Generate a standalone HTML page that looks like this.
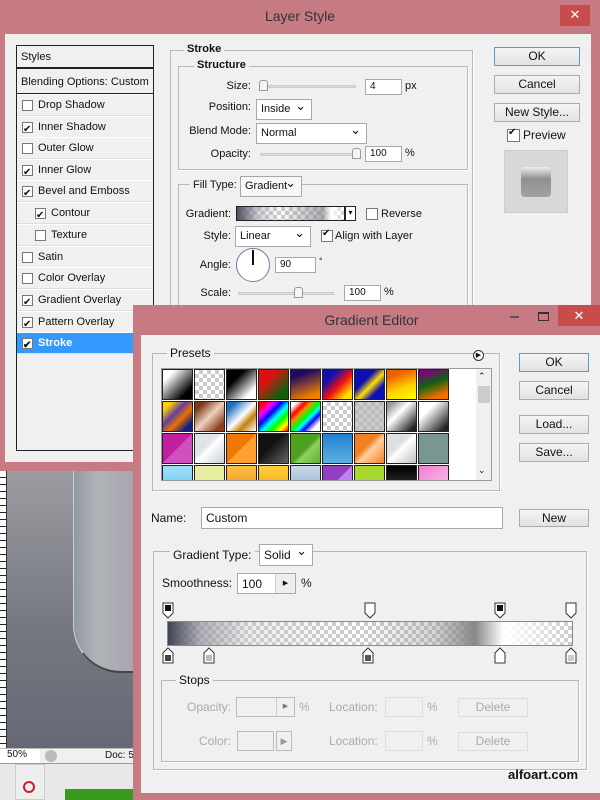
<!DOCTYPE html>
<html><head><meta charset="utf-8"><style>
*{margin:0;padding:0;box-sizing:border-box}
body{width:600px;height:800px;overflow:hidden;position:relative;background:#e8e8e8;font-family:"Liberation Sans",sans-serif;font-size:11px;color:#111}
.a{position:absolute}
.pink{background:#c67b82}
.gb{position:absolute;border:1px solid #b8b8b8;box-shadow:1px 1px 0 #fff}
.lg{position:absolute;background:#f0f0f0;padding:0 3px;white-space:nowrap}
.inp{position:absolute;background:#fff;border:1px solid #a8a8a8;padding:2px 4px;white-space:nowrap;overflow:hidden}
.sel{position:absolute;background:#fff;border:1px solid #a8a8a8;padding:3px 4px;white-space:nowrap}
.sel:after{content:"⌄";position:absolute;right:5px;top:-2px;font-size:13px}
.btn{position:absolute;background:linear-gradient(#f4f4f4,#e2e2e2);border:1px solid #acacac;text-align:center;font-size:12px;line-height:16px}
.cb{position:absolute;width:11px;height:11px;border:1px solid #777;background:#fff}
.cb.on:after{content:"✔";position:absolute;left:0px;top:-3px;font-size:10px;color:#111}
.li{position:absolute;left:17px;width:135px;height:22px;border-top:1px solid #fff;border-bottom:1px solid #ddd;line-height:20px;padding-left:21px;white-space:nowrap}
.li .cb{left:5px;top:5px}
.r{text-align:right}
.sl{position:absolute;height:3px;background:#ddd;border:1px solid #ccc}
.th{position:absolute;width:9px;height:11px;border:1px solid #999;background:#f4f4f4;border-radius:3px 3px 0 0}
.sw{position:absolute;width:31px;height:31px;border:1px solid #222}
.chk{background-color:#fff;background-image:linear-gradient(45deg,#ccc 25%,transparent 25%,transparent 75%,#ccc 75%),linear-gradient(45deg,#ccc 25%,transparent 25%,transparent 75%,#ccc 75%);background-size:8px 8px;background-position:0 0,4px 4px}
.dis{color:#aaa}
</style></head><body>

<!-- Layer Style dialog -->
<div class="a pink" style="left:0;top:0;width:600px;height:471px"></div>
<div class="a" style="left:0;top:8px;width:600px;text-align:center;font-size:14px;color:#333">Layer Style</div>
<div class="a" style="left:560px;top:5px;width:30px;height:21px;background:#c94c4c;color:#fff;text-align:center;font-size:13px;line-height:20px">✕</div>
<div class="a" style="left:5px;top:34px;width:586px;height:428px;background:#f0f0f0"></div>

<div class="a" style="left:16px;top:45px;width:138px;height:406px;border:1px solid #222;background:#f0f0f0"></div>
<div class="a" style="left:17px;top:46px;width:136px;height:23px;border-bottom:2px solid #222;line-height:22px;padding-left:4px">Styles</div>
<div class="a" style="left:17px;top:71px;width:136px;height:23px;border-bottom:1px solid #222;line-height:22px;padding-left:4px">Blending Options: Custom</div>
<div class="li" style="top:94px"><span class="cb"></span>Drop Shadow</div>
<div class="li" style="top:116px"><span class="cb on"></span>Inner Shadow</div>
<div class="li" style="top:137px"><span class="cb"></span>Outer Glow</div>
<div class="li" style="top:159px"><span class="cb on"></span>Inner Glow</div>
<div class="li" style="top:180px"><span class="cb on"></span>Bevel and Emboss</div>
<div class="li" style="top:202px;padding-left:34px"><span class="cb on" style="left:18px"></span>Contour</div>
<div class="li" style="top:224px;padding-left:34px"><span class="cb" style="left:18px"></span>Texture</div>
<div class="li" style="top:246px"><span class="cb"></span>Satin</div>
<div class="li" style="top:267px"><span class="cb"></span>Color Overlay</div>
<div class="li" style="top:289px"><span class="cb on"></span>Gradient Overlay</div>
<div class="li" style="top:311px"><span class="cb on"></span>Pattern Overlay</div>
<div class="li" style="top:332px;background:#3399ff;color:#fff;font-weight:bold"><span class="cb on"></span>Stroke</div>

<div class="gb" style="left:170px;top:50px;width:303px;height:260px"></div>
<div class="lg" style="left:184px;top:43px;font-weight:bold">Stroke</div>
<div class="gb" style="left:178px;top:66px;width:290px;height:104px"></div>
<div class="lg" style="left:194px;top:59px;font-weight:bold">Structure</div>
<div class="a r" style="left:180px;top:80px;width:71px">Size:</div>
<div class="sl" style="left:260px;top:85px;width:96px"></div><div class="th" style="left:259px;top:80px"></div>
<div class="inp" style="left:365px;top:79px;width:37px;height:16px;font-size:10px;padding-top:1px">4</div>
<div class="a" style="left:405px;top:80px">px</div>
<div class="a r" style="left:180px;top:101px;width:71px">Position:</div>
<div class="sel" style="left:256px;top:99px;width:56px;height:21px">Inside</div>
<div class="a r" style="left:180px;top:125px;width:71px">Blend Mode:</div>
<div class="sel" style="left:256px;top:123px;width:111px;height:21px">Normal</div>
<div class="a r" style="left:180px;top:148px;width:71px">Opacity:</div>
<div class="sl" style="left:260px;top:153px;width:96px"></div><div class="th" style="left:352px;top:148px"></div>
<div class="inp" style="left:365px;top:146px;width:37px;height:16px;font-size:10px;padding-top:1px">100</div>
<div class="a" style="left:405px;top:147px">%</div>

<div class="gb" style="left:178px;top:184px;width:290px;height:130px"></div>
<div class="lg" style="left:190px;top:179px">Fill Type:</div>
<div class="sel" style="left:240px;top:176px;width:62px;height:21px;background:#f7f7f7;padding-right:14px">Gradient</div>
<div class="a r" style="left:180px;top:208px;width:51px">Gradient:</div>
<div class="a chk" style="left:236px;top:206px;width:109px;height:15px;border:1px solid #222"></div>
<div class="a" style="left:237px;top:207px;width:107px;height:13px;background:linear-gradient(90deg,#505060,rgba(160,160,170,.5) 20%,rgba(255,255,255,0) 40%,rgba(120,120,130,.6) 80%,#fff 88%,rgba(255,255,255,0))"></div>
<div class="a" style="left:345px;top:206px;width:11px;height:15px;border:1px solid #222;background:#fff;font-size:8px;text-align:center;line-height:12px">▾</div>
<div class="cb" style="left:366px;top:208px;width:12px;height:12px"></div>
<div class="a" style="left:381px;top:208px">Reverse</div>
<div class="a r" style="left:180px;top:230px;width:51px">Style:</div>
<div class="sel" style="left:235px;top:226px;width:76px;height:21px">Linear</div>
<div class="cb on" style="left:321px;top:230px;width:12px;height:12px"></div>
<div class="a" style="left:335px;top:230px">Align with Layer</div>
<div class="a r" style="left:180px;top:259px;width:51px">Angle:</div>
<div class="a" style="left:236px;top:248px;width:34px;height:34px;border:1px solid #7080a0;border-radius:50%;background:#fff"></div>
<div class="a" style="left:252px;top:250px;width:2px;height:15px;background:#111"></div>
<div class="inp" style="left:275px;top:257px;width:41px;height:16px;font-size:10px;padding-top:1px">90</div>
<div class="a" style="left:319px;top:256px;font-size:9px">°</div>
<div class="a r" style="left:180px;top:287px;width:51px">Scale:</div>
<div class="sl" style="left:238px;top:292px;width:96px"></div><div class="th" style="left:294px;top:287px"></div>
<div class="inp" style="left:344px;top:285px;width:37px;height:16px;font-size:10px;padding-top:1px">100</div>
<div class="a" style="left:384px;top:286px">%</div>

<div class="btn" style="left:494px;top:47px;width:86px;height:19px;border-color:#5b9bd5">OK</div>
<div class="btn" style="left:494px;top:75px;width:86px;height:19px">Cancel</div>
<div class="btn" style="left:494px;top:103px;width:86px;height:19px">New Style...</div>
<div class="cb on" style="left:507px;top:129px;width:13px;height:13px"></div>
<div class="a" style="left:523px;top:128px;font-size:12px">Preview</div>
<div class="a" style="left:504px;top:150px;width:64px;height:63px;background:#d8d8d8;border:1px solid #ccc"></div>
<div class="a" style="left:521px;top:167px;width:30px;height:30px;background:linear-gradient(#eee,#8e9090 40%,#a0a2a2);border-radius:4px"></div>

<!-- canvas area -->
<div class="a" style="left:0;top:471px;width:133px;height:277px;background:linear-gradient(#9a9ca0,#74767f 60%,#666876)"></div>
<div class="a" style="left:0;top:471px;width:7px;height:277px;background:repeating-linear-gradient(#fff 0 6px,#222 6px 7px);border-right:1px solid #333"></div>
<div class="a" style="left:73px;top:471px;width:60px;height:202px;background:linear-gradient(90deg,#8f9aa0,#b0b4b8 40%,#a8a4b0);border-radius:0 0 0 48px;border-left:1px solid #ccd;border-bottom:2px solid #444"></div>
<div class="a" style="left:0;top:748px;width:133px;height:16px;background:#f0f0f0;border-top:1px solid #bbb;border-bottom:1px solid #999"></div>
<div class="a" style="left:0;top:749px;width:40px;height:14px;background:#fff;font-size:10px;padding-left:7px">50%</div>
<div class="a" style="left:45px;top:750px;width:12px;height:12px;border-radius:50%;background:#bbb"></div>
<div class="a" style="left:105px;top:750px;font-size:10px">Doc: 5</div>
<div class="a" style="left:15px;top:764px;width:30px;height:36px;border:1px solid #ccc;background:#eee"></div>
<div class="a" style="left:23px;top:781px;width:12px;height:12px;border:2px solid #c82030;border-radius:50%"></div>
<div class="a" style="left:65px;top:789px;width:68px;height:11px;background:#3a9a20"></div>

<!-- Gradient Editor -->
<div class="a pink" style="left:133px;top:305px;width:467px;height:495px"></div>
<div class="a" style="left:133px;top:312px;width:467px;text-align:center;font-size:14px;color:#333;padding-left:10px">Gradient Editor</div>
<div class="a" style="left:510px;top:316px;width:9px;height:2px;background:#555"></div>
<div class="a" style="left:538px;top:312px;width:11px;height:9px;border:1px solid #333;border-top-width:2px"></div>
<div class="a" style="left:558px;top:305px;width:42px;height:21px;background:#c94c4c;color:#fff;text-align:center;font-size:13px;line-height:21px">✕</div>
<div class="a" style="left:141px;top:335px;width:459px;height:458px;background:#f0f0f0"></div>

<div class="gb" style="left:152px;top:353px;width:348px;height:138px"></div>
<div class="lg" style="left:167px;top:346px;font-size:12px">Presets</div>
<div class="a" style="left:473px;top:350px;width:11px;height:11px;border:1px solid #333;border-radius:50%;background:#fff;font-size:7px;line-height:9px;text-align:center">▶</div>
<div class="a" style="left:161px;top:368px;width:331px;height:113px;background:#fff;border:1px solid #999;overflow:hidden">
<div class="sw" style="left:0;top:0;background:linear-gradient(135deg,#fff 20%,#000 80%)"></div>
<div class="sw chk" style="left:32px;top:0"></div>
<div class="sw" style="left:64px;top:0;background:linear-gradient(135deg,#000 30%,#fff 80%)"></div>
<div class="sw" style="left:96px;top:0;background:linear-gradient(135deg,#e01010 30%,#106010 80%)"></div>
<div class="sw" style="left:128px;top:0;background:linear-gradient(160deg,#200a60 20%,#f08000 85%)"></div>
<div class="sw" style="left:160px;top:0;background:linear-gradient(135deg,#1010b0 25%,#f01010 55%,#ffe000 85%)"></div>
<div class="sw" style="left:192px;top:0;background:linear-gradient(135deg,#1010b0 35%,#ffe000 55%,#1010b0 75%)"></div>
<div class="sw" style="left:224px;top:0;background:linear-gradient(160deg,#f06000 20%,#ffd000 60%,#ffff00)"></div>
<div class="sw" style="left:256px;top:0;background:linear-gradient(160deg,#800080 10%,#106010 45%,#f07000 85%)"></div>
<div class="sw" style="left:0;top:32px;background:linear-gradient(135deg,#ffd000 15%,#6040a0 40%,#f07000 60%,#102080 85%)"></div>
<div class="sw" style="left:32px;top:32px;background:linear-gradient(135deg,#7a3a10 15%,#f0d0c0 50%,#8a4020 85%)"></div>
<div class="sw" style="left:64px;top:32px;background:linear-gradient(135deg,#2070c0 15%,#fff 50%,#c08010 70%,#fff)"></div>
<div class="sw" style="left:96px;top:32px;background:linear-gradient(135deg,red 10%,#f0f 25%,blue 40%,cyan 55%,lime 70%,yellow 85%,red)"></div>
<div class="sw" style="left:128px;top:32px;background:linear-gradient(135deg,#fff 10%,red 25%,#f80 35%,lime 50%,cyan 60%,blue 70%,#fff 85%)"></div>
<div class="sw chk" style="left:160px;top:32px"></div>
<div class="sw chk" style="left:192px;top:32px;background-color:#bbb"></div>
<div class="sw" style="left:224px;top:32px;background:linear-gradient(135deg,#999 10%,#fff 40%,#222 90%)"></div>
<div class="sw" style="left:256px;top:32px;background:linear-gradient(135deg,#fff 30%,#222 90%)"></div>
<div class="sw" style="left:0;top:64px;background:linear-gradient(135deg,#c020a0 50%,#d050c0 50%)"></div>
<div class="sw" style="left:32px;top:64px;background:linear-gradient(135deg,#e0e4e8 40%,#fff 50%,#c8d0d8)"></div>
<div class="sw" style="left:64px;top:64px;background:linear-gradient(135deg,#f07800 50%,#ffa030 50%)"></div>
<div class="sw" style="left:96px;top:64px;background:linear-gradient(135deg,#111 40%,#666)"></div>
<div class="sw" style="left:128px;top:64px;background:linear-gradient(135deg,#50a020 50%,#90d060 60%,#60b030)"></div>
<div class="sw" style="left:160px;top:64px;background:linear-gradient(#2080d0,#60b0e0)"></div>
<div class="sw" style="left:192px;top:64px;background:linear-gradient(135deg,#f08020 40%,#ffd0a0 55%,#f08020)"></div>
<div class="sw" style="left:224px;top:64px;background:linear-gradient(135deg,#e0e0e0 40%,#fff 50%,#c0c0c0)"></div>
<div class="sw" style="left:256px;top:64px;background:#7a9690"></div>
<div class="sw" style="left:0;top:96px;background:linear-gradient(#a0e0f8,#60c8f0)"></div>
<div class="sw" style="left:32px;top:96px;background:#e8eca0"></div>
<div class="sw" style="left:64px;top:96px;background:linear-gradient(#f8c040,#f09020)"></div>
<div class="sw" style="left:96px;top:96px;background:linear-gradient(#ffd040,#f0a000)"></div>
<div class="sw" style="left:128px;top:96px;background:linear-gradient(#c8d8e8,#90b0d0)"></div>
<div class="sw" style="left:160px;top:96px;background:linear-gradient(135deg,#9040c0 50%,#c080f0 50%)"></div>
<div class="sw" style="left:192px;top:96px;background:#a8d830"></div>
<div class="sw" style="left:224px;top:96px;background:linear-gradient(#000,#444)"></div>
<div class="sw" style="left:256px;top:96px;background:linear-gradient(135deg,#f080d0,#ffc0f0)"></div>
</div>
<div class="a" style="left:476px;top:369px;width:15px;height:111px;background:#f0f0f0"></div>
<div class="a" style="left:478px;top:371px;font-size:9px">⌃</div>
<div class="a" style="left:478px;top:386px;width:12px;height:17px;background:#ccc"></div>
<div class="a" style="left:478px;top:465px;font-size:9px">⌄</div>

<div class="btn" style="left:519px;top:353px;width:70px;height:19px;border-color:#5b9bd5">OK</div>
<div class="btn" style="left:519px;top:381px;width:70px;height:19px">Cancel</div>
<div class="btn" style="left:519px;top:415px;width:70px;height:19px">Load...</div>
<div class="btn" style="left:519px;top:443px;width:70px;height:19px">Save...</div>

<div class="a" style="left:151px;top:511px;font-size:12px">Name:</div>
<div class="inp" style="left:201px;top:507px;width:302px;height:22px;font-size:12px;padding-top:3px">Custom</div>
<div class="btn" style="left:519px;top:509px;width:70px;height:18px">New</div>

<div class="gb" style="left:153px;top:551px;width:434px;height:219px"></div>
<div class="lg" style="left:170px;top:548px;font-size:12px">Gradient Type:</div>
<div class="sel" style="left:259px;top:544px;width:54px;height:22px;font-size:12px">Solid</div>
<div class="a" style="left:162px;top:576px;font-size:12px">Smoothness:</div>
<div class="inp" style="left:237px;top:573px;width:59px;height:21px;font-size:12px;padding-top:3px">100</div>
<div class="a" style="left:275px;top:574px;width:20px;height:19px;border-left:1px solid #ccc;background:#eee;font-size:7px;text-align:center;line-height:19px">▶</div>
<div class="a" style="left:301px;top:576px;font-size:12px">%</div>

<div class="a chk" style="left:167px;top:621px;width:406px;height:25px;border:1px solid #888"></div>
<div class="a" style="left:168px;top:622px;width:404px;height:23px;background:linear-gradient(90deg,#404454 0%,rgba(150,150,160,.75) 8%,rgba(200,200,205,.35) 20%,rgba(255,255,255,0) 48%,rgba(150,150,155,.4) 66%,#888 76%,#fff 83%,rgba(255,255,255,.6) 90%,rgba(255,255,255,0))"></div>
<svg class="a" style="left:0;top:0" width="600" height="800">
<g stroke="#333" fill="#fff">
<path d="M163 603h10v10l-5 5l-5-5z"/><path d="M365 603h10v10l-5 5l-5-5z"/><path d="M495 603h10v10l-5 5l-5-5z"/><path d="M566 603h10v10l-5 5l-5-5z"/>
<path d="M163 663v-10l5-5l5 5v10z"/><path d="M204 663v-10l5-5l5 5v10z"/><path d="M363 663v-10l5-5l5 5v10z"/><path d="M495 663v-10l5-5l5 5v10z"/><path d="M566 663v-10l5-5l5 5v10z"/>
</g>
<rect x="165" y="605" width="6" height="6" fill="#111"/><rect x="497" y="605" width="6" height="6" fill="#111"/>
<rect x="165" y="655" width="6" height="6" fill="#444"/><rect x="206" y="655" width="6" height="6" fill="#bbb"/><rect x="365" y="655" width="6" height="6" fill="#555"/><rect x="568" y="655" width="6" height="6" fill="#ccc"/>
</svg>

<div class="gb" style="left:161px;top:680px;width:418px;height:82px"></div>
<div class="lg" style="left:176px;top:673px;font-size:12px">Stops</div>
<div class="a dis r" style="left:170px;top:700px;width:61px;font-size:12px">Opacity:</div>
<div class="a" style="left:236px;top:697px;width:59px;height:20px;border:1px solid #bbb"></div>
<div class="a dis" style="left:276px;top:698px;width:18px;height:18px;border-left:1px solid #ccc;font-size:7px;text-align:center;line-height:18px;color:#777">▶</div>
<div class="a dis" style="left:299px;top:700px;font-size:12px">%</div>
<div class="a dis" style="left:329px;top:700px;font-size:12px">Location:</div>
<div class="a" style="left:385px;top:697px;width:38px;height:20px;border:1px solid #ddd"></div>
<div class="a dis" style="left:427px;top:700px;font-size:12px">%</div>
<div class="a dis" style="left:458px;top:698px;width:70px;height:19px;border:1px solid #ddd;text-align:center;font-size:12px;line-height:17px">Delete</div>
<div class="a dis r" style="left:170px;top:734px;width:61px;font-size:12px">Color:</div>
<div class="a" style="left:237px;top:731px;width:37px;height:20px;border:1px solid #bbb"></div>
<div class="a dis" style="left:276px;top:731px;width:16px;height:20px;border:1px solid #bbb;font-size:9px;text-align:center;line-height:18px;color:#999">▶</div>
<div class="a dis" style="left:329px;top:734px;font-size:12px">Location:</div>
<div class="a" style="left:385px;top:731px;width:38px;height:20px;border:1px solid #ddd"></div>
<div class="a dis" style="left:427px;top:734px;font-size:12px">%</div>
<div class="a dis" style="left:458px;top:732px;width:70px;height:19px;border:1px solid #ddd;text-align:center;font-size:12px;line-height:17px">Delete</div>

<div class="a" style="left:508px;top:767px;font-size:13px;font-weight:bold;color:#111">alfoart.com</div>
</body></html>
